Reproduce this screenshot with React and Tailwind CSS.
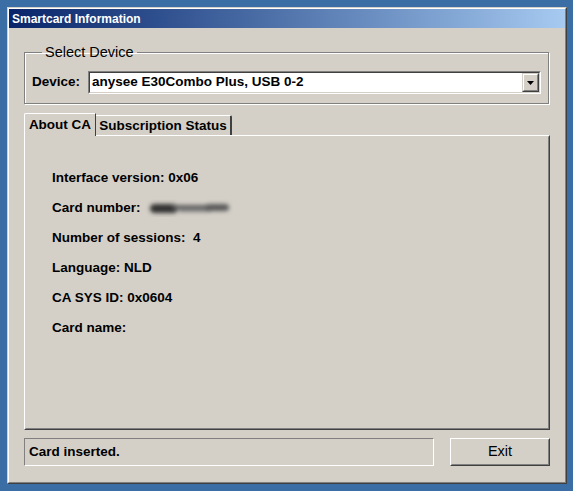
export default function App() {
  const lines = [
    { label: "Interface version: 0x06" },
    { label: "Card number:", blur: true },
    { label: "Number of sessions:  4" },
    { label: "Language: NLD" },
    { label: "CA SYS ID: 0x0604" },
    { label: "Card name:" },
  ];

  return (
    <div
      className="w-[573px] h-[491px] bg-[#3a6ea5] pt-[7px] pl-[7px] overflow-hidden"
      style={{ fontFamily: '"Liberation Sans", Arial, sans-serif' }}
    >
      {/* window frame */}
      <div className="w-[560px] h-[477px] border border-t-[#d4d0c8] border-l-[#d4d0c8] border-b-[#404040] border-r-[#404040]">
        <div className="h-full border border-t-white border-l-white border-b-[#808080] border-r-[#808080] bg-[#d4d0c8] flex flex-col">
          {/* title bar */}
          <div className="h-[19px] bg-gradient-to-r from-[#0a246a] to-[#a6caf0] flex items-center pl-[3px]">
            <span className="text-white font-bold text-[12px] leading-none">Smartcard Information</span>
          </div>

          <div className="flex flex-col px-[15px] pt-[16px]">
            {/* Select Device group */}
            <fieldset className="w-[525px] border border-[#808080] shadow-[1px_1px_0_#fff,inset_1px_1px_0_#fff] pl-[7px] pr-[7px] pb-[9px]">
              <legend className="ml-[10px] px-[3px] text-[14.5px] leading-[16px] text-black">Select Device</legend>
              <div className="flex items-center mt-[11px]">
                <span className="text-[13.5px] font-bold text-black w-[56px]">Device:</span>
                <div className="w-[453px] h-[23px] border border-t-[#808080] border-l-[#808080] border-b-white border-r-white">
                  <div className="h-full border border-t-[#404040] border-l-[#404040] border-b-[#d4d0c8] border-r-[#d4d0c8] bg-white flex items-center">
                    <span className="flex-1 pl-[2px] text-[13.5px] font-bold text-black">anysee E30Combo Plus, USB 0-2</span>
                    <div className="w-[17px] h-[19px] border border-t-[#d4d0c8] border-l-[#d4d0c8] border-b-[#404040] border-r-[#404040]">
                      <div className="h-full border border-t-white border-l-white border-b-[#808080] border-r-[#808080] bg-[#d4d0c8] flex items-center justify-center">
                        <svg width="7" height="4" viewBox="0 0 7 4">
                          <path d="M0 0h7L3.5 4z" fill="#000" />
                        </svg>
                      </div>
                    </div>
                  </div>
                </div>
              </div>
            </fieldset>

            {/* tabs */}
            <div className="mt-[9px] flex items-end h-[22px]">
              <div className="relative z-10 w-[72px] h-[23px] -mb-px bg-[#d4d0c8] border-t border-l border-white border-r border-r-[#404040] rounded-tl-[2px] flex justify-center pt-[3px]">
                <span className="text-[13.5px] font-bold text-black leading-[16px]">About CA</span>
              </div>
              <div className="w-[136px] h-[20px] border-t border-white border-r-2 border-r-[#404040] rounded-tr-[2px] flex justify-center pt-[2px]">
                <span className="text-[13.5px] font-bold text-black leading-[16px]">Subscription Status</span>
              </div>
            </div>

            {/* tab panel */}
            <div className="w-[526px] h-[295px] border border-t-white border-l-white border-b-[#404040] border-r-[#404040]">
              <div className="h-full border border-transparent border-b-[#808080] border-r-[#808080] flex flex-col pt-[26px] pl-[26px]">
                {lines.map((l, i) => (
                  <div key={i} className="h-[30px] flex items-center">
                    <span className="text-[13.5px] font-bold text-black whitespace-pre">{l.label}</span>
                    {l.blur && (
                      <svg className="ml-[4px]" width="88" height="18" viewBox="0 0 88 18">
                        <defs>
                          <filter id="bl" x="-20%" y="-60%" width="140%" height="220%">
                            <feGaussianBlur stdDeviation="1.9" />
                          </filter>
                        </defs>
                        <g filter="url(#bl)">
                          <rect x="5" y="5" width="28" height="9" rx="4.5" fill="#333" />
                          <rect x="28" y="6" width="36" height="4" fill="#5e5e5e" />
                          <rect x="34" y="10" width="32" height="3" fill="#808080" />
                          <rect x="60" y="5" width="24" height="7" rx="3.5" fill="#5a5a5a" />
                        </g>
                      </svg>
                    )}
                  </div>
                ))}
              </div>
            </div>

            {/* bottom row */}
            <div className="mt-[8px] flex items-center">
              <div className="w-[410px] h-[28px] border border-t-[#808080] border-l-[#808080] border-b-white border-r-white flex items-center pl-[4px]">
                <span className="text-[13.5px] font-bold text-black">Card inserted.</span>
              </div>
              <div className="ml-[16px] w-[100px] h-[28px] border border-t-white border-l-white border-b-[#404040] border-r-[#404040]">
                <div className="h-full border border-transparent border-b-[#808080] border-r-[#808080] flex items-center justify-center">
                  <span className="text-[14.5px] text-black">Exit</span>
                </div>
              </div>
            </div>
          </div>
        </div>
      </div>
    </div>
  );
}
